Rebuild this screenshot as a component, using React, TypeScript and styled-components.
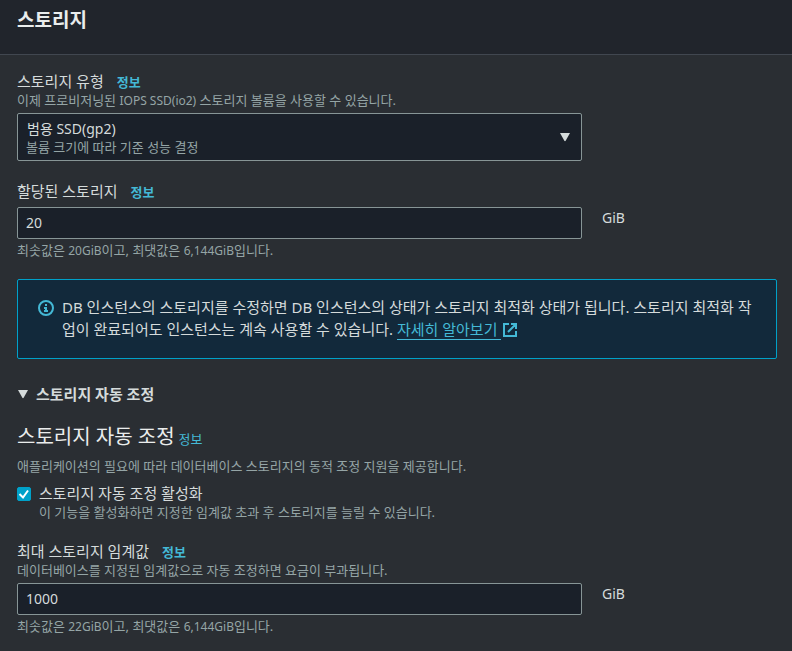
import React, { useState } from "react";
import styled, { createGlobalStyle } from "styled-components";

const Global = createGlobalStyle`
  * { box-sizing: border-box; }
  body {
    margin: 0;
    background: #2a2e33;
    color: #d5dbdb;
    font-family: "Noto Sans", "Noto Sans CJK KR", sans-serif;
    font-size: 15px;
    line-height: 22px;
  }
`;

const Header = styled.header`
  background: #21252c;
  border-bottom: 1px solid #414750;
  padding: 6px 17px 20px;
`;
const Title = styled.h2`
  margin: 0;
  color: #eaeded;
  font-size: 19px;
  line-height: 28px;
  font-weight: 700;
`;
const Body = styled.div`
  display: flex;
  flex-direction: column;
  padding: 15px 15px 16px 17px;
`;
const Field = styled.section`
  margin-bottom: 16px;
`;
const LabelRow = styled.div`
  display: flex;
  align-items: baseline;
  gap: 13px;
  height: 22px;
`;
const Info = styled.a<{ $strong: boolean }>`
  color: #44b9d6;
  font-size: 13px;
  font-weight: ${({ $strong }) => ($strong ? 700 : 400)};
  line-height: 18px;
  text-decoration: none;
`;
const Hint = styled.p`
  margin: 0;
  color: #95a5a6;
  font-size: 13px;
  line-height: 16px;
`;
/* Latin runs are set one step smaller than the Hangul around them. */
const Latin = styled.span`
  font-size: 12px;
  line-height: 1;
`;
const InputRow = styled.div`
  display: grid;
  grid-template-columns: minmax(0, 565fr) minmax(0, 175fr);
  column-gap: 20px;
  margin: 5px 0 3px;
`;
const Unit = styled.span`
  font-size: 14px;
`;
const TextInput = styled.input`
  width: 100%;
  height: 32px;
  padding: 3px 8px 5px;
  border: 1px solid #879596;
  border-radius: 2px;
  background: #1a2029;
  color: #d5dbdb;
  font: inherit;
  font-size: 14px;
`;
const SelectBox = styled.div`
  display: grid;
  > * { grid-area: 1 / 1; }
`;
const Select = styled.select`
  appearance: none;
  width: 100%;
  height: 48px;
  padding: 4px 36px 20px 9px;
  border: 1px solid #879596;
  border-radius: 2px;
  background: #1a2029;
  color: #d5dbdb;
  font: inherit;
  font-size: 14px;
`;
const SelectDetail = styled(Hint)`
  align-self: end;
  padding: 0 36px 6px 9px;
  pointer-events: none;
`;
const Caret = styled.svg`
  display: block;
  width: 12px;
  height: 10px;
  fill: #d5dbdb;
`;
const SelectCaret = styled(Caret)`
  align-self: center;
  justify-self: end;
  margin-right: 11px;
  pointer-events: none;
`;
const Notice = styled.aside`
  display: flex;
  gap: 8px;
  margin: 5px 0 24px;
  padding: 16px 20px 18px;
  border: 1px solid #00a1c9;
  border-radius: 2px;
  background: #12293b;
`;
const NoticeIcon = styled.svg`
  flex: none;
  width: 16px;
  height: 16px;
  margin-top: 4px;
`;
const NoticeText = styled.p`
  margin: 0;
`;
const MoreLink = styled.a`
  color: #44b9d6;
  text-decoration: none;
`;
const MoreText = styled.span`
  padding-right: 4px;
  border-bottom: 1px solid #44b9d6;
`;
const ExternalIcon = styled.svg`
  width: 14px;
  height: 14px;
  margin-left: 2px;
  vertical-align: -2px;
`;
const Toggle = styled.button`
  display: flex;
  align-items: center;
  align-self: flex-start;
  gap: 7px;
  padding: 0;
  border: 0;
  background: none;
  color: #d5dbdb;
  font: inherit;
  font-weight: 700;
`;
const SubHeading = styled.div`
  display: flex;
  align-items: baseline;
  gap: 4px;
  height: 28px;
  margin-top: 18px;
`;
const SubTitle = styled.h3`
  margin: 0;
  color: #eaeded;
  font-size: 20px;
  line-height: 28px;
  font-weight: 400;
`;
const Description = styled(Hint)`
  margin: 5px 0 6px;
  line-height: 20px;
`;
const CheckRow = styled.div`
  display: grid;
  grid-template-columns: 14px 1fr;
  column-gap: 8px;
  margin-bottom: 20px;
`;
const CheckBoxCell = styled.span`
  display: grid;
  align-content: start;
  padding-top: 5px;
  > * { grid-area: 1 / 1; }
`;
const Checkbox = styled.input`
  appearance: none;
  width: 14px;
  height: 14px;
  margin: 0;
  border: 1px solid #879596;
  border-radius: 2px;
  background: #1a2029;
  &:checked { border-color: #00a1c9; background: #00a1c9; }
`;
const CheckMark = styled.svg`
  width: 14px;
  height: 14px;
  pointer-events: none;
`;

function Triangle() {
  return <path d="M1 1h10L6.8 8.6q-.8 1.2-1.6 0z" />;
}

function InfoLink({ topic, strong = true }: { topic: string; strong?: boolean }) {
  return <Info href="#info" title={topic} $strong={strong}>정보</Info>;
}

export default function App() {
  const [open, setOpen] = useState(true);
  const [scaling, setScaling] = useState(true);
  return (
    <main>
      <Global />
      <Header><Title>스토리지</Title></Header>
      <Body>
        <Field>
          <LabelRow><label htmlFor="type">스토리지 유형</label><InfoLink topic="스토리지 유형" /></LabelRow>
          <Hint>이제 프로비저닝된 <Latin>IOPS SSD(io2)</Latin> 스토리지 볼륨을 사용할 수 있습니다.</Hint>
          <InputRow>
            <SelectBox>
              <Select id="type" aria-describedby="type-detail"><option>범용 SSD(gp2)</option></Select>
              <SelectDetail id="type-detail">볼륨 크기에 따라 기준 성능 결정</SelectDetail>
              <SelectCaret viewBox="0 0 12 10" aria-hidden="true"><Triangle /></SelectCaret>
            </SelectBox>
          </InputRow>
        </Field>
        <Field>
          <LabelRow><label htmlFor="allocated">할당된 스토리지</label><InfoLink topic="할당된 스토리지" /></LabelRow>
          <InputRow><TextInput id="allocated" defaultValue="20" /><Unit>GiB</Unit></InputRow>
          <Hint>최솟값은 <Latin>20GiB</Latin>이고, 최댓값은 <Latin>6,144GiB</Latin>입니다.</Hint>
        </Field>
        <Notice>
          <NoticeIcon viewBox="0 0 16 16" fill="none" aria-hidden="true">
            <circle cx="8" cy="8" r="7" stroke="#44b9d6" strokeWidth="2" />
            <path d="M7 4h2v2H7zM6 7h3v3h1v2H6v-2h1V9H6z" fill="#44b9d6" />
          </NoticeIcon>
          <NoticeText>
            DB 인스턴스의 스토리지를 수정하면 DB 인스턴스의 상태가 스토리지 최적화 상태가 됩니다. 스토리지 최적화 작업이 완료되어도 인스턴스는 계속 사용할 수 있습니다.{" "}
            <MoreLink href="#more">
              <MoreText>자세히 알아보기</MoreText>
              <ExternalIcon viewBox="0 0 14 14" fill="none" stroke="#44b9d6" strokeWidth="2" aria-hidden="true">
                <path d="M6 1H1v12h12V8M8 1h5v5M13 1 5 9" />
              </ExternalIcon>
            </MoreLink>
          </NoticeText>
        </Notice>
        <Toggle type="button" aria-expanded={open} onClick={() => setOpen(!open)}>
          <Caret viewBox="0 0 12 10" aria-hidden="true"><Triangle /></Caret>
          스토리지 자동 조정
        </Toggle>
        {open && (
          <>
            <SubHeading><SubTitle>스토리지 자동 조정</SubTitle><InfoLink topic="스토리지 자동 조정" strong={false} /></SubHeading>
            <Description>애플리케이션의 필요에 따라 데이터베이스 스토리지의 동적 조정 지원을 제공합니다.</Description>
            <CheckRow>
              <CheckBoxCell>
                <Checkbox id="scaling" type="checkbox" checked={scaling} onChange={() => setScaling(!scaling)} aria-describedby="scaling-hint" />
                {scaling && (
                  <CheckMark viewBox="0 0 14 14" fill="none" stroke="#fff" strokeWidth="2" aria-hidden="true">
                    <path d="m2.5 7 3.5 3.5 5-7" />
                  </CheckMark>
                )}
              </CheckBoxCell>
              <div>
                <LabelRow><label htmlFor="scaling">스토리지 자동 조정 활성화</label></LabelRow>
                <Hint id="scaling-hint">이 기능을 활성화하면 지정한 임계값 초과 후 스토리지를 늘릴 수 있습니다.</Hint>
              </div>
            </CheckRow>
            <Field>
              <LabelRow><label htmlFor="maximum">최대 스토리지 임계값</label><InfoLink topic="최대 스토리지 임계값" /></LabelRow>
              <Hint>데이터베이스를 지정된 임계값으로 자동 조정하면 요금이 부과됩니다.</Hint>
              <InputRow><TextInput id="maximum" defaultValue="1000" /><Unit>GiB</Unit></InputRow>
              <Hint>최솟값은 <Latin>22GiB</Latin>이고, 최댓값은 <Latin>6,144GiB</Latin>입니다.</Hint>
            </Field>
          </>
        )}
      </Body>
    </main>
  );
}
